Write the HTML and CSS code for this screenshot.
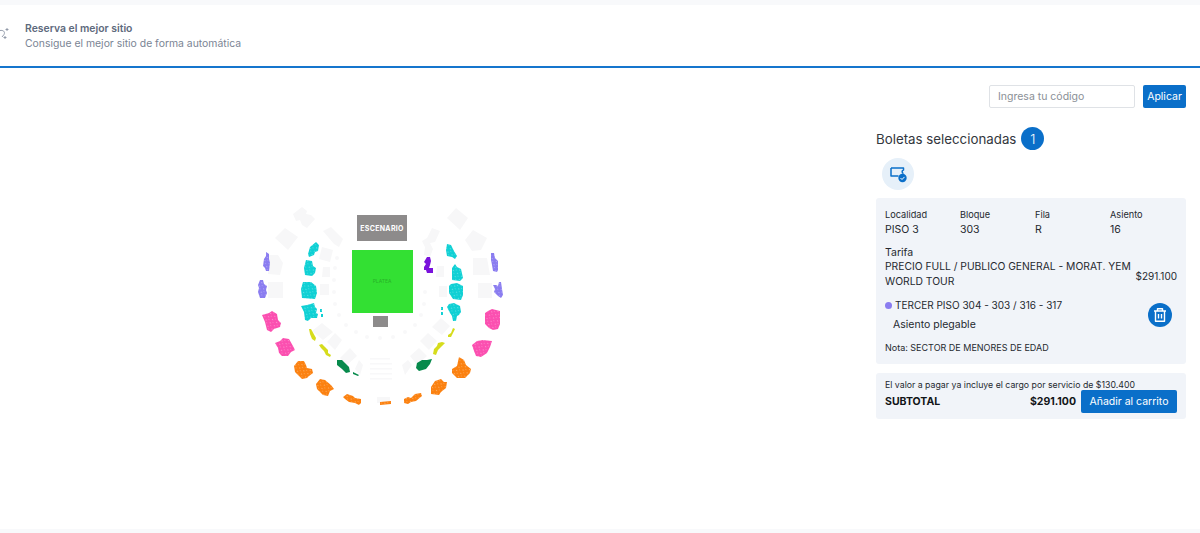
FILE: index.html
```html
<!DOCTYPE html>
<html lang="es">
<head>
    <meta charset="UTF-8">
    <title>Selecciona tu asiento</title>
    <link rel="stylesheet" href="styles.css">
</head>
<body>
    <div class="top-strip"></div>

    <!-- Best seat banner -->
    <div class="best-seat">
        <svg class="sparkle" width="12" height="18" viewBox="0 0 12 18" fill="none" stroke="#8a93a3" stroke-width="0.900">
            <path d="M0 2.500C3 2 5.500 3.500 4 6.500L2 9"/>
            <path d="M7 0v3M5.500 1.500h3M5 8v3M3.500 9.500h3"/>
        </svg>
        <div class="best-seat-text">
            <strong>Reserva el mejor sitio</strong>
            <span>Consigue el mejor sitio de forma automática</span>
        </div>
    </div>

    <div class="main">
        <!-- Seat map -->
        <div class="map-area">
            <svg class="venue" width="260" height="210" viewBox="250 200 260 210">
                <defs>
                    <pattern id="speck-tile" width="5" height="4" patternUnits="userSpaceOnUse" patternTransform="rotate(35)">
                        <rect width="5" height="4" fill="#fff"/>
                        <rect x="1" y="1" width="1.200" height="0.600" fill="#666"/>
                        <rect x="3.500" y="3" width="0.600" height="0.800" fill="#666"/>
                    </pattern>
                    <mask id="specks" maskUnits="userSpaceOnUse" x="250" y="200" width="260" height="210">
                        <rect x="250" y="200" width="260" height="210" fill="url(#speck-tile)"/>
                    </mask>
                </defs>

                <!-- faint sold out blocks -->
                <g fill="#f7f7f8">
                    <path d="M293 214l9-7 5 4-1 3 5 1 4 4-8 9-5-3-2-5-4 1z"/>
                    <path d="M275 238l10-10 13 9-10 13z"/>
                    <path d="M331 227l12 12-4 8-5-3-11-13z"/>
                    <path d="M447 218l9-10 12 10-8 12z"/>
                    <path d="M465 240l8-10 14 8-6 12-9 1z"/>
                    <path d="M432 228l8 3-5 11-5 1 3 6-3 8-6-2 1-8-3-6 5-3z"/>
                    <path d="M268 255h10l5 8-3 12-12-1z"/>
                    <path d="M268 282h15v16h-15z"/>
                    <path d="M478 283h14v15h-14z"/>
                    <path d="M473 258h14l3 17h-17z"/>
                    <path d="M322 247l11 3-3 12-11-3z"/>
                    <path d="M323 267h7v10h-8z"/>
                    <path d="M320 284h9v11h-9z"/>
                    <path d="M437 266h7v11h-8z"/>
                    <path d="M439 286h8v11h-8z"/>
                    <path d="M312 331l10-8 11 9-10 8z"/>
                    <path d="M327 342l8-9 7 7-7 10z"/>
                    <path d="M340 358l10-10 7 8-10 9z"/>
                    <path d="M355 369l4-9 4 5-3 10z"/>
                    <path d="M420 341l8-8 9 8-8 9z"/>
                    <path d="M432 327l9-9 9 8-8 9z"/>
                    <path d="M410 356l9-8 8 8-10 9z"/>
                    <path d="M402 365l6-5 4 5-7 10z"/>
                    <path d="M377 397h13v6h-13z"/>
                </g>
                <!-- rows under the stage -->
                <g fill="#f8f8f9">
                    <rect x="370" y="358" width="20" height="1.500"/>
                    <rect x="370" y="363" width="22" height="1.500"/>
                    <rect x="370" y="368" width="22" height="1.500"/>
                    <rect x="370" y="373" width="22" height="1.500"/>
                    <rect x="370" y="378" width="22" height="1.500"/>
                    <circle cx="337" cy="258" r="2"/><circle cx="335" cy="268" r="2"/>
                    <circle cx="334" cy="280" r="2"/><circle cx="334" cy="292" r="2"/>
                    <circle cx="335" cy="304" r="2"/><circle cx="339" cy="315" r="2"/>
                    <circle cx="346" cy="325" r="2"/><circle cx="356" cy="332" r="2"/>
                    <circle cx="367" cy="337" r="2"/><circle cx="380" cy="338" r="2"/>
                    <circle cx="393" cy="337" r="2"/><circle cx="405" cy="332" r="2"/>
                    <circle cx="415" cy="325" r="2"/><circle cx="421" cy="315" r="2"/>
                    <circle cx="424" cy="304" r="2"/><circle cx="425" cy="292" r="2"/>
                </g>

                <g mask="url(#specks)">
                    <!-- lavender -->
                    <g fill="#8a7cf0">
                        <path d="M266 252l3 2 0 5 1 4-1 8-3 0-1-3-2-2 1-7 2-3z"/>
                        <path d="M260 280l3 0 1 4 3 2-1 4 1 3-2 5-5 0-2-6 1-4-1-3z"/>
                        <path d="M491 253l3 0 1 5 3 3 0 9-1 2-4-1-1-6-1-5z"/>
                        <path d="M499 282l2 0 1 7 1 6-2 3-3-2-4-4 1-3-2-4 3 0 2 1z"/>
                    </g>
                    <!-- cyan -->
                    <g fill="#0fd0d4">
                        <path d="M316 242l3 3-1 6-3 1-1 3-5 2-1-3 2-7z"/>
                        <path d="M306 260l6 1 1 5 3 2-1 5-3 3-7-1-1-7z"/>
                        <path d="M303 282l8 0 5 4 1 7-2 6-13-1-1-9z"/>
                        <path d="M301 306l6-1 7-2 1 4 2 2-1 4 2 1-1 4-6 0-3 3-3-1-1-8z"/>
                        <path d="M320 309h2v3h-2zM321 314h2v3h-2z"/>
                        <path d="M447 244l4 1 3 6 3 5-2 3-3-2-5-1-1-6z"/>
                        <path d="M455 264l2 3 4 2 2 9-3 3-8-1 0-6 0-6z"/>
                        <path d="M451 284l6-1 6 3 0 9-2 5-8-1-4-6 0-7z"/>
                        <path d="M449 304l5-1 6 3 1 6-2 3-2 1-1 5-3 0-1-5-2-3-3-6z"/>
                        <path d="M441 307h2v3h-2zM441 312h2v3h-2z"/>
                    </g>
                    <!-- pink -->
                    <g fill="#fb4fb0">
                        <path d="M262 315l7-2 3-2 5 3 1 6 3 3-1 4-6 2-3 3-4-2-2-8z"/>
                        <path d="M275 343l5-2 3-3 6 1 4 7 2 4-4 2-3 4-6 0-3-3-1-5z"/>
                        <path d="M485 313l3-2 4-2 8 2 0 13-2 5-5 1-4-2-4-4z"/>
                        <path d="M472 345l5-4 6-1 9 1-2 6-3 6-6 4-5-1-2-5z"/>
                    </g>
                    <!-- orange -->
                    <g fill="#fb8110">
                        <path d="M294 366l4-5 6 0 2 4 1 3 5 1 1 4-4 3-2 2-5 1-4-4-3-3z"/>
                        <path d="M316 384l4-5 5 1 6 5 3 4-4 2-2 5-5-1-6-6z"/>
                        <path d="M343 397l4-3 6 2 2 2 6 1 0 4-2 2-4-2-6-1-4-3z"/>
                        <path d="M380 402l11-1 0 3-11 1z"/>
                        <path d="M404 399l4-2 3 1 4-4 6-1 1 3-6 5-5 1-3 2-4-1z"/>
                        <path d="M431 387l4-6 6-2 3 3 3 0-1 6-5 4-2 3-8-1z"/>
                        <path d="M452 369l5-3 2-9 5 3 2 5 5 4-1 4-5 5-5 0-3 0-5-5z"/>
                    </g>
                </g>
                <!-- purple -->
                <path fill="#7a12dc" d="M427 257l3 0 1 4-1 4-1 3 4 0 0 5-6 0-1-3-2 0 0-3 2-3-2-2z"/>
                <!-- yellow -->
                <g fill="#d6dc1c">
                    <path d="M309 329l2 0 5 9-1 3-3-2-2-5z"/>
                    <path d="M319 345l3-1 3 3 3 3 0 3 3 2-1 2-4-2-2-4-3-3z"/>
                    <path d="M453 328l2 1-2 4-2 4-3 0 0-2 3-2z"/>
                    <path d="M442 342l3 1-3 3-4 4-2 5-3-1 1-5 3-3 1-3z"/>
                </g>
                <!-- green -->
                <g fill="#078a4c">
                    <path d="M337 360l5 0 3 3 4 4 1 5-4 1-4-4-5-4z"/>
                    <path d="M353 372l6 3-1 1-5-2z"/>
                    <path d="M422 360l5 0 5-1-2 5-4 5-7 2-3-3 1-5z"/>
                </g>

                <!-- stage -->
                <rect x="357" y="215" width="50" height="26" fill="#8d8b8b"/>
                <text class="stage-label" x="382" y="231" text-anchor="middle">ESCENARIO</text>
                <rect x="352" y="250" width="61" height="63" fill="#33e033"/>
                <text class="floor-label" x="382" y="283" text-anchor="middle">PLATEA</text>
                <rect x="373" y="316" width="15" height="11" fill="#8d8b8b"/>
            </svg>
        </div>

        <!-- Cart column -->
        <div class="cart">
            <div class="code-row">
                <input class="code-input" type="text" placeholder="Ingresa tu código">
                <button class="btn apply">Aplicar</button>
            </div>

            <div class="cart-title">
                <span>Boletas seleccionadas</span>
                <span class="count">1</span>
            </div>

            <div class="ticket-icon">
                <svg width="18" height="18" viewBox="0 0 18 18" fill="none">
                    <path d="M2 3h12.500v2a1.800 1.800 0 0 0 0 3.500M2 3v8h7.500" stroke="#0a6fc9" stroke-width="1.500" stroke-linejoin="round"/>
                    <circle cx="13.500" cy="13" r="4.200" fill="#0a6fc9"/>
                    <path d="M11.500 13l1.500 1.500 2.500-2.600" stroke="#fff" stroke-width="1"/>
                </svg>
            </div>

            <div class="ticket-card">
                <div class="seat-grid">
                    <div class="seat-cell"><small>Localidad</small><span>PISO 3</span></div>
                    <div class="seat-cell"><small>Bloque</small><span>303</span></div>
                    <div class="seat-cell"><small>Fila</small><span>R</span></div>
                    <div class="seat-cell"><small>Asiento</small><span>16</span></div>
                </div>
                <div class="rate-label">Tarifa</div>
                <div class="rate-row">
                    <span class="rate-name">PRECIO FULL / PUBLICO GENERAL - MORAT. YEM WORLD TOUR</span>
                    <span class="rate-price">$291.100</span>
                </div>
                <div class="zone-row">
                    <div>
                        <div class="zone-name"><i class="dot"></i>TERCER PISO 304 - 303 / 316 - 317</div>
                        <div class="seat-type">Asiento plegable</div>
                    </div>
                    <button class="trash" aria-label="Eliminar">
                        <svg width="16" height="16" viewBox="0 0 16 16" fill="none" stroke="#fff" stroke-width="1.400" stroke-linejoin="round">
                            <path d="M2 4h12M5.500 4V1.800h5V4M3.500 4v10.200h9V4M6.500 7v4.500M9.500 7v4.500"/>
                        </svg>
                    </button>
                </div>
                <div class="note">Nota: SECTOR DE MENORES DE EDAD</div>
            </div>

            <div class="total-card">
                <div class="fee">El valor a pagar ya incluye el cargo por servicio de $130.400</div>
                <div class="total-row">
                    <strong>SUBTOTAL</strong>
                    <strong class="total-price">$291.100</strong>
                    <button class="btn add">Añadir al carrito</button>
                </div>
            </div>
        </div>
    </div>

    <div class="bottom-strip"></div>
</body>
</html>
```

FILE: styles.css
```css
body {
    font-family: Inter, "Noto Sans", Arial, sans-serif;
    background-color: #ffffff;
    color: #25292f;
    margin: 0;
    height: 533px;
    overflow: hidden;
    display: flex;
    flex-direction: column;
}

.top-strip {
    height: 5px;
    background-color: #f8f9fb;
}

.best-seat {
    height: 63px;
    box-sizing: border-box;
    padding-top: 2px;
    display: flex;
    align-items: center;
    gap: 13px;
    border-bottom: 2px solid #1575cd;
}

.best-seat-text {
    display: flex;
    flex-direction: column;
    gap: 3px;
    font-size: 10.400px;
    line-height: 12px;
    color: #7a8494;
}

.best-seat-text strong {
    color: #5e6a7d;
    font-weight: 600;
}

.main {
    flex: 1;
    display: flex;
    justify-content: space-between;
}

.map-area {
    padding: 132px 0 0 250px;
}

.venue {
    display: block;
    filter: blur(0.3px);
}

.stage-label {
    font-size: 7px;
    font-weight: 700;
    letter-spacing: 0.3px;
    fill: #ffffff;
}

.floor-label {
    font-size: 5px;
    fill: #27b327;
}

.cart {
    width: 310px;
    padding: 17px 14px 0 0;
}

.code-row {
    display: flex;
    justify-content: flex-end;
    gap: 8px;
    height: 23px;
}

.code-input {
    width: 146px;
    height: 23px;
    box-sizing: border-box;
    border: 1px solid #dfe2e6;
    border-radius: 2px;
    padding: 0 8px;
    font-family: inherit;
    font-size: 10.500px;
}

.code-input::placeholder {
    color: #8a8f96;
}

.btn {
    background-color: #0a6fc9;
    color: #ffffff;
    border: none;
    border-radius: 2px;
    font-family: inherit;
    cursor: pointer;
}

.apply {
    width: 43px;
    font-size: 10.500px;
    padding: 0;
}

.cart-title {
    display: flex;
    align-items: center;
    gap: 5px;
    margin-top: 19px;
    font-size: 13.300px;
    color: #33373d;
}

.count {
    width: 23px;
    height: 23px;
    border-radius: 50%;
    background-color: #0a6fc9;
    color: #ffffff;
    display: flex;
    align-items: center;
    justify-content: center;
    font-size: 13px;
    font-weight: 300;
}

.ticket-icon {
    width: 32px;
    height: 32px;
    margin: 8px 0 0 6px;
    border-radius: 50%;
    background-color: #e6f0f9;
    display: flex;
    align-items: center;
    justify-content: center;
}

.ticket-card,
.total-card {
    background-color: #f1f4f9;
    border-radius: 3px;
    box-sizing: border-box;
    padding: 0 9px;
    font-size: 10.500px;
}

.ticket-card {
    margin-top: 8px;
    height: 166px;
    padding-top: 11px;
}

.seat-grid {
    display: grid;
    grid-template-columns: repeat(4, 75px);
}

.seat-cell {
    display: flex;
    flex-direction: column;
    gap: 3px;
    line-height: 12px;
}

.seat-cell small {
    font-size: 9.200px;
}

.rate-label {
    margin-top: 10px;
    line-height: 13px;
}

.rate-row {
    display: flex;
    align-items: center;
    justify-content: space-between;
}

.rate-name {
    width: 252px;
    font-size: 10.300px;
    line-height: 15px;
}

.rate-price {
    margin-top: 4px;
    font-size: 10px;
}

.zone-row {
    display: flex;
    justify-content: space-between;
    margin-top: 9px;
}

.zone-name {
    display: flex;
    align-items: center;
    font-size: 10px;
    line-height: 14px;
}

.dot {
    width: 7px;
    height: 7px;
    border-radius: 50%;
    background-color: #8a7cf0;
    margin-right: 3px;
}

.seat-type {
    margin: 6px 0 0 8px;
    line-height: 14px;
}

.trash {
    width: 24px;
    height: 24px;
    margin: 5px 5px 0 0;
    padding: 0;
    border: none;
    border-radius: 50%;
    background-color: #0a6fc9;
    display: flex;
    align-items: center;
    justify-content: center;
}

.note {
    margin-top: 10px;
    font-size: 9px;
    line-height: 12px;
}

.total-card {
    margin-top: 9px;
    height: 46px;
    padding-top: 7px;
}

.fee {
    font-size: 8.750px;
    line-height: 10px;
}

.total-row {
    display: flex;
    align-items: center;
    height: 23px;
}

.total-row strong {
    font-weight: 700;
    color: #111418;
}

.total-price {
    margin-left: auto;
    margin-right: 5px;
}

.add {
    width: 96px;
    height: 23px;
    font-size: 10.500px;
    padding: 0;
}

.bottom-strip {
    height: 4px;
    background-color: #f8f9fb;
}
```
